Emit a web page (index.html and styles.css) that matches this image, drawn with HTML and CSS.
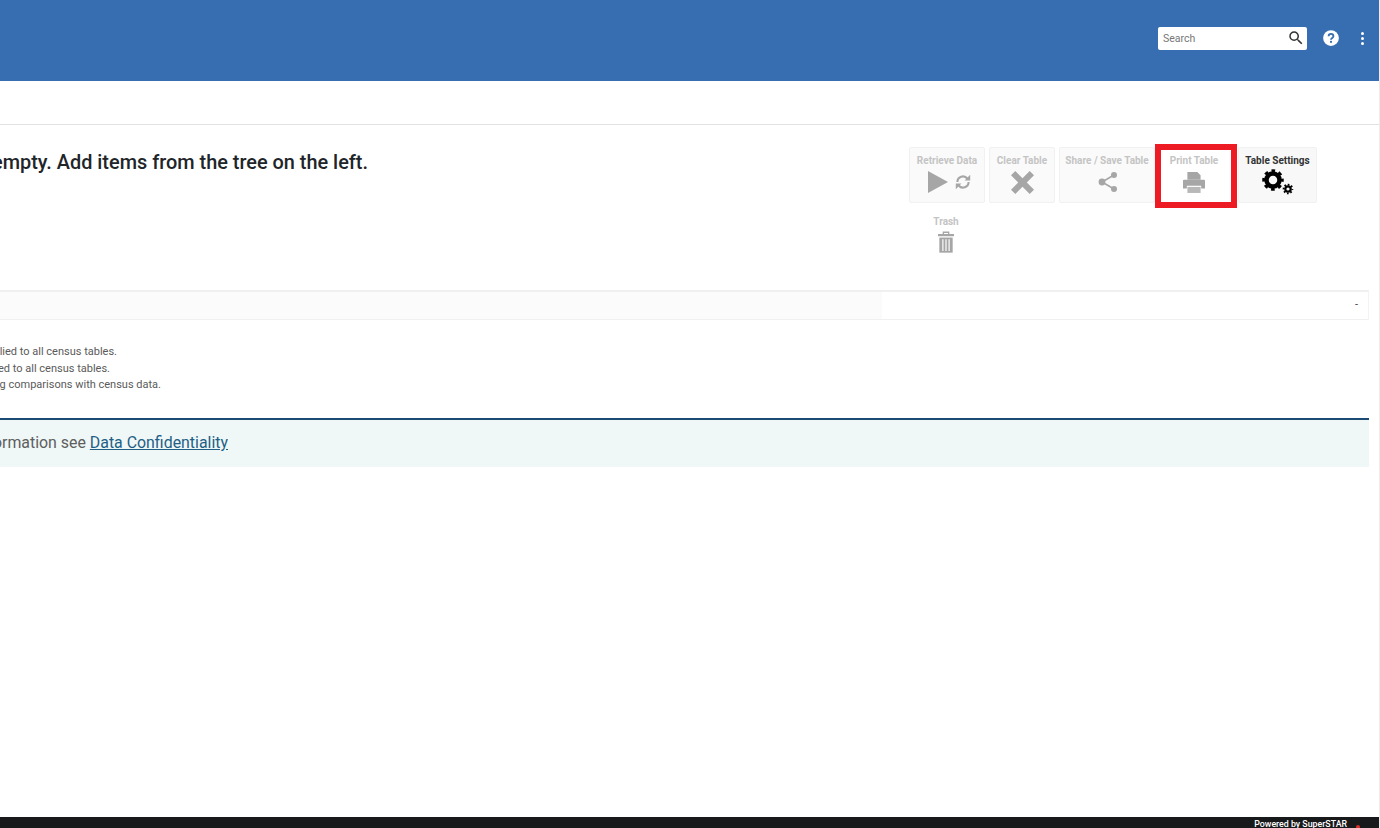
FILE: index.html
```html
<!DOCTYPE html>
<html lang="en">
<head>
<meta charset="utf-8">
<title>Table View</title>
<link rel="stylesheet" href="styles.css">
</head>
<body>
<div class="page">
  <header class="topbar">
    <div class="search">
      <span class="search-text">Search</span>
      <svg class="search-icon" viewBox="0 0 24 24" width="18" height="18"><path d="M15.5 14h-.79l-.28-.27A6.471 6.471 0 0 0 16 9.500 6.500 6.500 0 1 0 9.500 16c1.610 0 3.090-.59 4.230-1.570l.27.28v.79l5 4.990L20.490 19l-4.990-5zm-6 0C7.010 14 5 11.990 5 9.500S7.010 5 9.500 5 14 7.010 14 9.500 11.990 14 9.500 14z" fill="#333"/></svg>
    </div>
    <svg class="help" viewBox="0 0 24 24" width="18" height="18"><circle cx="12" cy="12" r="10.500" fill="#fff"/><path d="M8.800 9.600a3.200 3.200 0 0 1 6.400 0c0 2.300-3.200 2.500-3.200 4.800" fill="none" stroke="#376eb1" stroke-width="2.400"/><rect x="10.700" y="15.800" width="2.600" height="2.600" fill="#376eb1"/></svg>
    <div class="kebab"><i></i><i></i><i></i></div>
  </header>
  <div class="subbar"></div>
  <main class="main">
    <section class="top-row">
      <h1 class="empty-msg"><span>empty. Add items from the tree on the left.</span></h1>
      <div class="toolbar">
        <div class="tool tool-retrieve">
          <span class="tool-label">Retrieve Data</span>
          <span class="tool-icons">
            <svg viewBox="1 1 20 22" width="20" height="22"><path d="M1 1l20 11L1 23z" fill="#a6a6a6"/></svg>
            <svg viewBox="2 2 20 20" width="16" height="16"><path d="M19 12a7 7 0 0 1-12.400 4.400M5 12a7 7 0 0 1 12.400-4.400" fill="none" stroke="#a6a6a6" stroke-width="2.600"/><path d="M21 3v7h-7zM3 21v-7h7z" fill="#a6a6a6"/></svg>
          </span>
        </div>
        <div class="tool tool-clear">
          <span class="tool-label">Clear Table</span>
          <span class="tool-icons"><svg viewBox="4 4 16 16" width="23" height="23"><path d="M4 7l3-3 5 5 5-5 3 3-5 5 5 5-3 3-5-5-5 5-3-3 5-5z" fill="#a6a6a6"/></svg></span>
        </div>
        <div class="tool tool-share">
          <span class="tool-label">Share / Save Table</span>
          <span class="tool-icons"><svg viewBox="2 1 20 22" width="20" height="22"><path d="M18 5L6 12l12 7" fill="none" stroke="#a6a6a6" stroke-width="1.600"/><circle cx="18" cy="5" r="3" fill="#a6a6a6"/><circle cx="6" cy="12" r="3.400" fill="#a6a6a6"/><circle cx="18" cy="19" r="3" fill="#a6a6a6"/></svg></span>
        </div>
        <div class="tool tool-print">
          <span class="tool-label">Print Table</span>
          <span class="tool-icons"><svg viewBox="2 2 20 19" width="22" height="21"><path d="M6 2h9l3 3v4H6z" fill="#a6a6a6"/><path d="M3 9h18a1 1 0 0 1 1 1v7h-3.500v-2.500h-13V17H2v-7a1 1 0 0 1 1-1z" fill="#a6a6a6"/><path d="M6 15.500h12V21H6z" fill="#b8b8b8"/></svg></span>
          <span class="highlight"></span>
        </div>
        <div class="tool tool-settings">
          <span class="tool-label">Table Settings</span>
          <span class="tool-icons">
            <svg viewBox="0 0 32 26" width="32" height="26">
              <circle cx="11" cy="11" r="6.500" fill="none" stroke="#000" stroke-width="4.500"/>
              <circle cx="11" cy="11" r="9" fill="none" stroke="#000" stroke-width="3.500" stroke-dasharray="3.500 3.570" stroke-dashoffset="1.750"/>
              <circle cx="26" cy="20" r="2.700" fill="none" stroke="#000" stroke-width="2.200"/>
              <circle cx="26" cy="20" r="4.400" fill="none" stroke="#000" stroke-width="1.800" stroke-dasharray="1.700 1.760" stroke-dashoffset="0.850"/>
            </svg>
          </span>
        </div>
        <div class="tool tool-trash">
          <span class="tool-label">Trash</span>
          <span class="tool-icons"><svg viewBox="0 0 18 24" width="16" height="22"><path d="M6 3V1h6v2" fill="none" stroke="#a6a6a6" stroke-width="1.500"/><path d="M0 3h18v2.500H0z" fill="#a6a6a6"/><path d="M1.500 7h15v17h-15z" fill="#a6a6a6"/><path d="M5.500 9v13M9 9v13M12.500 9v13" stroke="#fff" stroke-width="1.300"/></svg></span>
        </div>
      </div>
    </section>
    <section class="data-row">
      <div class="data-label"></div>
      <div class="data-value">-</div>
    </section>
    <section class="notes">
      <p class="note note-a"><span>applied to all census tables.</span></p>
      <p class="note note-b"><span>applied to all census tables.</span></p>
      <p class="note note-c"><span>making comparisons with census data.</span></p>
    </section>
    <section class="banner">
      <p class="banner-text"><span>information see <a href="#">Data Confidentiality</a></span></p>
    </section>
  </main>
  <footer class="footer">
    <span class="powered">Powered by SuperSTAR</span>
    <span class="dot"></span>
  </footer>
</div>
</body>
</html>
```

FILE: styles.css
```css
* { box-sizing: border-box; }
html, body { margin: 0; height: 100%; overflow: hidden; background: #fff; }
body { font-family: Roboto, "Liberation Sans", sans-serif; }

.page {
  width: 1380px;
  height: 828px;
  display: flex;
  flex-direction: column;
  border-right: 1px solid #ececec;
}

.topbar {
  height: 81px;
  flex: none;
  background: #376eb1;
  display: flex;
  align-items: center;
  justify-content: flex-end;
  padding: 0 15px 5px 0;
}
.search {
  width: 149px;
  height: 23px;
  background: #fff;
  border-radius: 2px;
  display: flex;
  align-items: center;
  justify-content: space-between;
  padding: 0 2px 0 5px;
}
.search-text { font-size: 10.500px; color: #777; }
.help { margin-left: 15px; }
.kebab {
  margin-left: 21px;
  width: 3px;
  display: flex;
  flex-direction: column;
  gap: 2px;
}
.kebab i { width: 3px; height: 3px; border-radius: 50%; background: #fff; }

.subbar {
  height: 44px;
  flex: none;
  border-bottom: 1px solid #e2e2e2;
}

.main { flex: 1; padding: 0 10px 0 0; }

.top-row {
  height: 165px;
  display: flex;
  justify-content: space-between;
  padding-top: 22px;
}
.empty-msg {
  margin: 0;
  width: 368px;
  height: 31px;
  display: flex;
  justify-content: flex-end;
  overflow: hidden;
  white-space: nowrap;
  font-size: 19.900px;
  line-height: 31px;
  font-weight: 500;
  color: #212529;
}

.toolbar {
  width: 408px;
  margin-right: 52px;
  display: flex;
  flex-wrap: wrap;
  align-content: flex-start;
  column-gap: 4px;
  row-gap: 7px;
}
.tool {
  position: relative;
  height: 56px;
  display: flex;
  flex-direction: column;
  align-items: center;
  padding-top: 7px;
  background: #fafafa;
  border: 1px solid #f1f1f1;
  border-radius: 2px;
}
.tool-label {
  font-size: 10px;
  line-height: 12px;
  font-weight: 700;
  color: #c4c4c4;
  white-space: nowrap;
}
.tool-icons {
  display: flex;
  align-items: center;
  justify-content: center;
  gap: 7px;
  height: 30px;
}
.tool-retrieve { width: 76px; }
.tool-retrieve .tool-icons { padding-left: 4px; }
.tool-clear { width: 66px; }
.tool-share { width: 96px; }
.tool-share .tool-icons { padding-left: 2px; }
.tool-print { width: 70px; margin-right: 5px; background: #fff; border-color: #fff; }
.tool-settings { width: 79px; background: #f8f8f8; }
.tool-settings .tool-label { color: #333; }
.tool-settings .tool-icons { padding-left: 1px; }
.tool-trash {
  width: 74px;
  height: 50px;
  background: transparent;
  border-color: transparent;
  padding-top: 5px;
}
.tool-trash .tool-icons { height: 26px; margin-top: 1px; }
.highlight {
  position: absolute;
  left: -5px;
  top: -4px;
  width: 82px;
  height: 64px;
  border: 6px solid #ed1c24;
}

.data-row {
  height: 30px;
  display: flex;
  border-top: 2px solid #f0f0f0;
  border-bottom: 1px solid #f0f0f0;
  border-right: 1px solid #f3f3f3;
}
.data-label { width: 882px; background: #fbfbfb; }
.data-value {
  flex: 1;
  text-align: right;
  padding-right: 10px;
  font-size: 11px;
  line-height: 25px;
  color: #444;
}

.notes { padding-top: 24px; height: 98px; }
.note {
  margin: 0;
  display: flex;
  justify-content: flex-end;
  overflow: hidden;
  white-space: nowrap;
  font-size: 11px;
  line-height: 16.500px;
  color: #5a5a5a;
}
.note-a { width: 117px; }
.note-b { width: 110px; }
.note-c { width: 161px; }

.banner {
  height: 49px;
  background: #eff7f7;
  border-top: 2px solid #1b4a73;
}
.banner-text {
  margin: 0;
  width: 228px;
  display: flex;
  justify-content: flex-end;
  overflow: hidden;
  white-space: nowrap;
  font-size: 15.900px;
  line-height: 45px;
  color: #5e5e5e;
}
.banner-text a { color: #1f5f85; text-decoration: underline; }

.footer {
  height: 11px;
  flex: none;
  margin-top: auto;
  background: #17191b;
  display: flex;
  align-items: center;
  justify-content: flex-end;
  padding-right: 19px;
  overflow: hidden;
}
.powered { font-size: 8.800px; line-height: 11px; font-weight: 500; color: #fff; padding-top: 3px; }
.dot {
  width: 4px;
  height: 4px;
  margin: 8px 0 0 9px;
  border-radius: 50%;
  background: #d9302c;
}
```
